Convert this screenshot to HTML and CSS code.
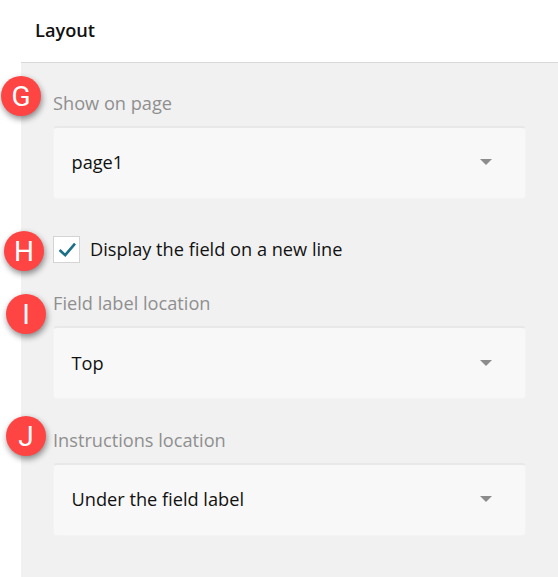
FILE: index.html
```html
<!DOCTYPE html>
<html lang="en">
<head>
<meta charset="utf-8">
<title>Layout</title>
<link rel="stylesheet" href="styles.css">
</head>
<body>
<header class="title"><h1>Layout</h1></header>
<main class="panel">
  <section class="field">
    <span class="badge badge-g">G</span>
    <label class="field-label">Show on page</label>
    <div class="select"><span>page1</span><i class="caret"></i></div>
  </section>
  <div class="check-row">
    <span class="badge badge-h">H</span>
    <span class="checkbox">
      <svg width="18" height="16" viewBox="0 0 18 16"><path d="M1.6 8 L7.2 13.2 L17 1.6" fill="none" stroke="#1b6f87" stroke-width="2.6"/></svg>
    </span>
    <span class="check-text">Display the field on a new line</span>
  </div>
  <section class="field field-i">
    <span class="badge badge-i">I</span>
    <label class="field-label">Field label location</label>
    <div class="select"><span>Top</span><i class="caret"></i></div>
  </section>
  <section class="field field-j">
    <span class="badge badge-j">J</span>
    <label class="field-label">Instructions location</label>
    <div class="select"><span>Under the field label</span><i class="caret"></i></div>
  </section>
</main>
</body>
</html>
```
FILE: styles.css
```css
* { box-sizing: border-box; }
html, body { margin: 0; height: 100%; overflow: hidden; }
body {
  width: 558px;
  height: 577px;
  background: #fff;
  font-family: "Open Sans", sans-serif;
  color: #111;
  display: flex;
  flex-direction: column;
}
.title { height: 63px; margin-left: 21px; padding: 18px 14px 0; border-bottom: 1px solid #d8d8d8; }
h1 { margin: 0; font-size: 18.2px; line-height: 24px; font-weight: 600; color: #111; }
.panel { flex: 1; margin-left: 21px; padding: 28px 32px 0; background: #f1f1f1; }
.field { position: relative; }
.field-label { display: block; font-size: 18.2px; line-height: 24px; color: #8f8f8f; margin-bottom: 11px; }
.select {
  height: 73px;
  display: flex;
  align-items: center;
  justify-content: space-between;
  padding: 0 33px 3px 17.5px;
  background: #f8f8f8;
  border: 1px solid #f3f3f3;
  border-top: 2px solid #e8e8e8;
  border-radius: 4px;
  font-size: 18.2px;
  color: #111;
}
.caret { width: 0; height: 0; border-left: 6px solid transparent; border-right: 6px solid transparent; border-top: 6px solid #8c8c8c; }
.check-row { position: relative; display: flex; align-items: center; gap: 10px; margin-top: 37px; height: 27px; }
.checkbox { width: 27px; height: 27px; display: flex; align-items: center; justify-content: center; background: #fff; border: 1px solid #d4d4d4; }
.check-text { font-size: 18.2px; line-height: 24px; position: relative; top: -1px; }
.field-i { margin-top: 28px; }
.field-i .select { padding-bottom: 1px; }
.field-j { margin-top: 29px; }
.badge {
  position: absolute;
  width: 40px;
  height: 40px;
  display: flex;
  align-items: center;
  justify-content: center;
  border-radius: 50%;
  background: #ff4444;
  color: #fff;
  font-family: Roboto, sans-serif;
  font-size: 28px;
  box-shadow: 1px 3px 6px rgba(0, 0, 0, 0.45);
}
.badge-g { left: -52px; top: -15px; }
.badge-h { left: -49px; top: -5px; }
.badge-i { left: -47px; top: 3px; }
.badge-j { left: -47px; top: -12px; }
```
